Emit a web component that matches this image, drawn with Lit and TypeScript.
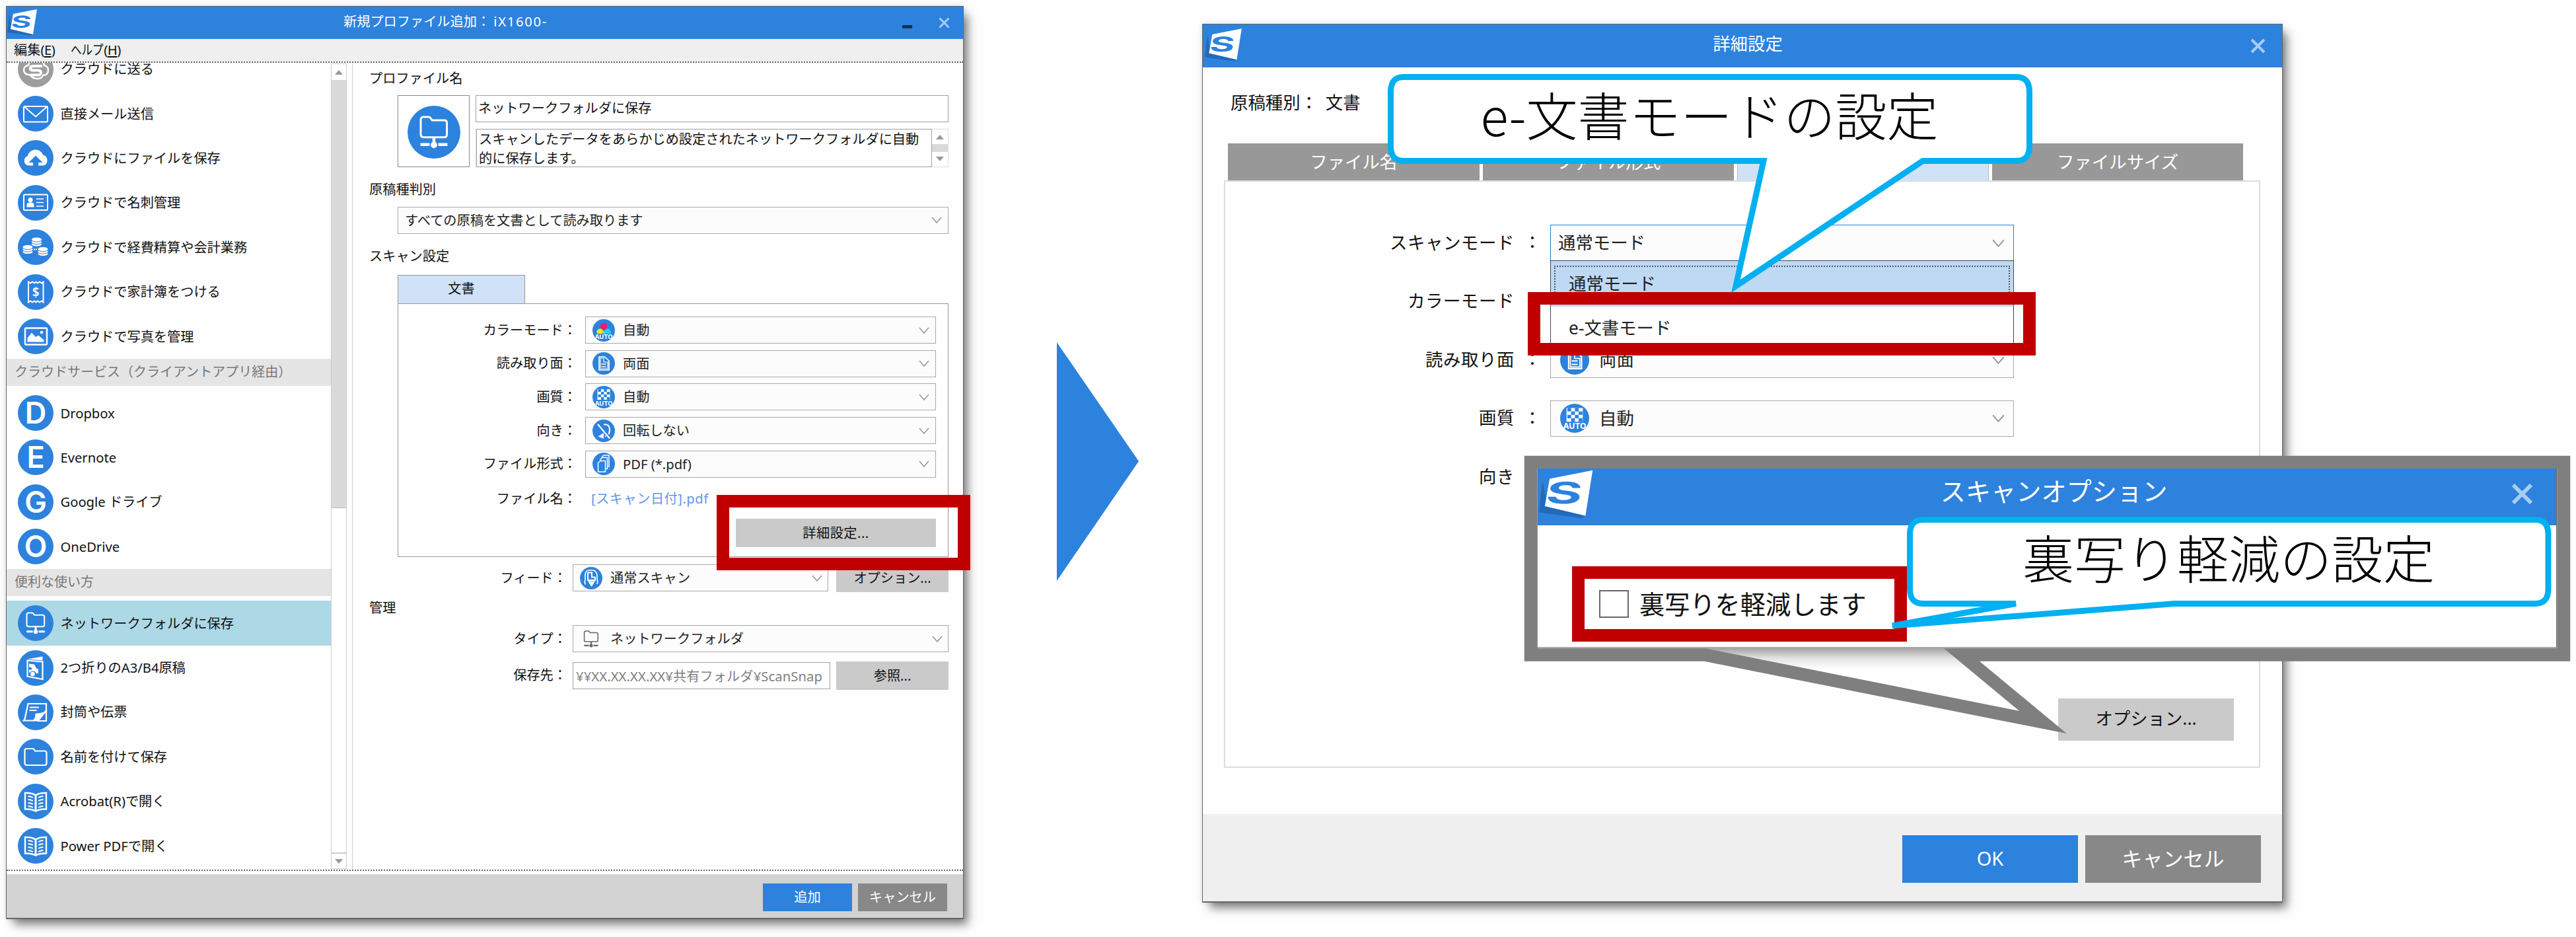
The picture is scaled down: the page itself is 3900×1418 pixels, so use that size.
import { LitElement, css, html, svg, nothing } from "lit";
import type { SVGTemplateResult } from "lit";
import { customElement, property } from "lit/decorators.js";
import { classMap } from "lit/directives/class-map.js";

const networkFolder = svg`
  <path d="M13.5 14.5q0-3 3-3h5.2q1.3 0 2 1.3l1.3 2h12.5q2.7 0 2.7 2.7v12q0 2.7-2.7 2.7H16.500q-3 0-3-3z" fill="none" stroke="currentColor" stroke-width="2"/>
  <path d="M13.200 39.700h9.300M31.500 39.700h9.300M27 33v4" stroke="currentColor" stroke-width="3"/>
  <circle cx="27" cy="40" r="3.300" fill="currentColor"/>`;

const book = svg`
  <path d="M27 17.500q-6-4-16-3.500v24.500q10-.5 16 3 6-3.500 16-3V14q-10-.5-16 3.500z" fill="none" stroke="#fff" stroke-width="2.400"/>
  <path d="M27 17v24" stroke="#fff" stroke-width="3"/>
  <path d="M15.500 19q4 0 7.500 2M15.500 24q4 0 7.500 2M15.500 29q4 0 7.500 2M15.500 34q4 0 7.500 2M38.500 19q-4 0-7.500 2M38.500 24q-4 0-7.500 2M38.500 29q-4 0-7.500 2M38.500 34q-4 0-7.500 2" fill="none" stroke="#fff" stroke-width="1.800"/>`;

const coins = (x: number, y: number) => svg`
  <g transform="translate(${x} ${y})" fill="#fff" stroke="#2d82dd" stroke-width="1">
    <ellipse cx="0" cy="10" rx="8" ry="3.600"/>
    <ellipse cx="0" cy="6.500" rx="8" ry="3.600"/>
    <ellipse cx="0" cy="3" rx="8" ry="3.600"/>
  </g>`;

const letter = (char: string) => svg`
  <text x="27" y="43.300" text-anchor="middle" font-family="Inter, sans-serif" font-weight="600" font-size="45" fill="#fff">${char}</text>`;

const glyphs: Record<string, SVGTemplateResult> = {
  send: svg`
    <path d="M17 35c-5 0-8-3-8-7s3-7 7-7c1-6 6-9 12-9s11 4 12 9c4 1 6 4 6 7 0 5-3 8-8 8-1 3-4 5-8 5-6 0-9-2-11-5z" fill="none" stroke="#fff" stroke-width="2.400"/>
    <path d="M37 22H24c-3 0-5 1-5 3.500s2 3 4 3h8c2.500 0 4 1 4 3.500S33 35.500 31 35.500H19" fill="none" stroke="#fff" stroke-width="4"/>`,
  mail: svg`
    <rect x="9" y="16" width="36" height="23.500" rx="1.500" fill="none" stroke="#fff" stroke-width="2"/>
    <path d="M10.500 17 27 31.500 43.500 17" fill="none" stroke="#fff" stroke-width="2"/>`,
  cloud: svg`
    <path d="M16.500 38.500a7.300 7.300 0 0 1-1.800-14.200 12.300 12.300 0 0 1 23.600-1.700 8.200 8.200 0 0 1 .2 15.900z" fill="#fff"/>
    <path d="M27 23.500 37.500 34H31v5h-8v-5h-6.500z" fill="#2d82dd"/>`,
  card: svg`
    <rect x="9" y="14.500" width="36" height="23.500" rx="1.500" fill="none" stroke="#fff" stroke-width="2"/>
    <circle cx="19" cy="22.500" r="3.500" fill="#fff"/>
    <path d="M13.500 33.500v-3q0-4 4-4h3q4 0 4 4v3z" fill="#fff"/>
    <path d="M28 21h11M28 26.500h11M28 32h11" stroke="#fff" stroke-width="1.500"/>`,
  coins: svg`${coins(28.5, 12.5)}${coins(15, 24)}${coins(38, 27)}
    <path d="M24 30.500h5" stroke="#fff" stroke-width="2" stroke-dasharray="2 1"/>`,
  receipt: svg`
    <path d="M16 11.500l3 2 3-2 3 2 2.500-2 2.500 2 3-2 3 2 2.500-2v31l-2.500-2-3 2-3-2-2.500 2-2.500-2-3 2-3-2-3 2z" fill="none" stroke="#fff" stroke-width="2"/>
    <text x="27.200" y="34" text-anchor="middle" font-family="Noto Sans, sans-serif" font-size="19" font-weight="600" fill="#fff">$</text>`,
  photo: svg`
    <rect x="11" y="14.500" width="33" height="25" rx="1.500" fill="none" stroke="#fff" stroke-width="2.400"/>
    <path d="M14.500 35.500v-6l6.500-8 6 6.500 4-2.500 8.500 7v3z" fill="#fff"/>
    <circle cx="36" cy="21" r="2.300" fill="#fff"/>`,
  dropbox: letter("D"),
  evernote: letter("E"),
  google: letter("G"),
  onedrive: letter("O"),
  network: networkFolder,
  flyer: svg`
    <path d="M14.500 15.500 37.500 17.500V44L14.500 39.500z" fill="none" stroke="#fff" stroke-width="2.200"/>
    <path d="M14 13.500 37.500 9.500V15.500z" fill="#fff"/>
    <path d="M17 20.500l8 1 3 6 3 1v6l-3 1q-1-4-5-4t-5 3l-1-1v-4h4v-3l-4-1z" fill="#fff"/>
    <circle cx="22.500" cy="36" r="3.300" fill="#fff"/>`,
  envelope: svg`
    <path d="M15.500 14H43v10L31 39.500H9q2-2 2.500-7z" fill="none" stroke="#fff" stroke-width="2.200"/>
    <path d="M43 24q-3 4-17 5 2 4-3 10h8.500z" fill="#fff"/>
    <path d="M43 24v16H29" fill="none" stroke="#fff" stroke-width="2.200"/>
    <path d="M18 19.500h14M17.500 24h11" stroke="#fff" stroke-width="2"/>`,
  folder: svg`
    <path d="M10.500 18q0-3 3-3h9q1.500 0 2.200 1.300l1.300 2.200h14.500q3 0 3 3v15.500q0 3-3 3h-27q-3 0-3-3z" fill="none" stroke="#fff" stroke-width="2.200"/>`,
  book,
};

const auto = svg`<text x="17" y="29.500" text-anchor="middle" font-family="Inter, sans-serif" font-size="9.500" font-weight="700" fill="#fff">AUTO</text>`;

// checker cells of the image quality symbol
const checker = [0, 1, 2, 3].flatMap((row) =>
  [0, 1, 2, 3].filter((col) => (row + col) % 2 === 0).map((col) => [8.5 + col * 4.4, 5 + row * 4]),
);

const smallGlyphs: Record<string, SVGTemplateResult> = {
  color: svg`
    <circle cx="17" cy="11" r="5.300" fill="#f01a70"/>
    <circle cx="11.500" cy="19.500" r="5" fill="#f5e614"/>
    <circle cx="23" cy="19.500" r="5" fill="#19d3ee"/>
    <path d="M14 26q-1-6 3-9 3 3 2 9z" fill="#7ddf92"/>
    <path d="M5 22h24v8H5z" fill="#2d82dd"/>${auto}`,
  page: svg`
    <path d="M10 7h8.500l6.500 6v14H10z" fill="none" stroke="#fff" stroke-width="1.700"/>
    <path d="M12 9h5v6h6v10H12z" fill="none" stroke="#fff" stroke-width="1.200"/>
    <path d="M13.500 18h7M13.500 22h7" stroke="#fff" stroke-width="1.600"/>`,
  quality: svg`
    <rect x="7.500" y="5" width="19" height="16" fill="#fff"/>
    ${checker.map(([x, y]) => svg`<rect x="${x}" y="${y}" width="4.400" height="4" fill="#2d82dd"/>`)}
    ${auto}`,
  rotate: svg`
    <path d="M17 7.500h4q5 1 5 8.500t-7 9.500" fill="none" stroke="#fff" stroke-width="2.200"/>
    <path d="M8.500 25.500 17 20v9z" fill="#fff"/>
    <path d="M9 6.500 26 28" stroke="#2d82dd" stroke-width="5"/>
    <path d="M8 7 26 28.500" stroke="#fff" stroke-width="2.200"/>`,
  pages: svg`
    <g fill="#2d82dd" stroke="#fff" stroke-width="1.500">
      <path d="M14.500 6l3-2h7.500v17h-10.500z"/>
      <path d="M12 10l3-2.500h7.500v17H12z"/>
      <path d="M8.500 15.500l3.500-3h7.500V29H8.500z"/>
    </g>`,
  feed: svg`
    <path d="M8 26.500q-1.500-4 0-8V11q1-6 6-6h7q5 3 5 8v5q1.500 4 0 8" fill="none" stroke="#fff" stroke-width="1.700"/>
    <path d="M12 8.500h6v7h5M12 8v12h11v-5" fill="none" stroke="#fff" stroke-width="2"/>
    <path d="M12 21.500h11L17.500 30z" fill="#fff"/>`,
};

@customElement("round-icon")
export class RoundIcon extends LitElement {
  @property({ type: String }) name = "";
  @property({ type: Boolean, reflect: true }) muted = false;

  static styles = css`
    :host {
      display: block;
      flex: none;
      width: 54px;
      height: 54px;
      border-radius: 50%;
      background: #2d82dd;
      color: #fff;
    }
    :host([muted]) {
      background: #9d9d9d;
    }
    svg {
      display: block;
      width: 100%;
      height: 100%;
    }
  `;

  render() {
    const small = this.name in smallGlyphs;
    return html`<svg viewBox=${small ? "0 0 34 34" : "0 0 54 54"}>
      ${small ? smallGlyphs[this.name] : glyphs[this.name]}
    </svg>`;
  }
}

type Entry = { icon: string; label: string; muted?: boolean; selected?: boolean };

const cloudEntries: Entry[] = [
  { icon: "send", label: "クラウドに送る", muted: true },
  { icon: "mail", label: "直接メール送信" },
  { icon: "cloud", label: "クラウドにファイルを保存" },
  { icon: "card", label: "クラウドで名刺管理" },
  { icon: "coins", label: "クラウドで経費精算や会計業務" },
  { icon: "receipt", label: "クラウドで家計簿をつける" },
  { icon: "photo", label: "クラウドで写真を管理" },
];

const serviceEntries: Entry[] = [
  { icon: "dropbox", label: "Dropbox" },
  { icon: "evernote", label: "Evernote" },
  { icon: "google", label: "Google ドライブ" },
  { icon: "onedrive", label: "OneDrive" },
];

const usageEntries: Entry[] = [
  { icon: "network", label: "ネットワークフォルダに保存", selected: true },
  { icon: "flyer", label: "2つ折りのA3/B4原稿" },
  { icon: "envelope", label: "封筒や伝票" },
  { icon: "folder", label: "名前を付けて保存" },
  { icon: "book", label: "Acrobat(R)で開く" },
  { icon: "book", label: "Power PDFで開く" },
];

const scanSettings = [
  { label: "カラーモード", icon: "color", value: "自動" },
  { label: "読み取り面", icon: "page", value: "両面" },
  { label: "画質", icon: "quality", value: "自動" },
  { label: "向き", icon: "rotate", value: "回転しない" },
  { label: "ファイル形式", icon: "pages", value: "PDF (*.pdf)" },
];

@customElement("app-root")
export class AppRoot extends LitElement {
  static styles = css`
    :host {
      display: block;
      position: relative;
      width: 3900px;
      height: 1418px;
      overflow: hidden;
      background: #fefefe;
      color: #111;
      font-family: "Noto Sans", "Noto Sans CJK JP", sans-serif;
      font-size: 20.2px;
      line-height: 30px;
      white-space: nowrap;
    }
    * {
      box-sizing: border-box;
    }

    .window {
      position: absolute;
      isolation: isolate;
      display: flex;
      flex-direction: column;
      background: #fefefe;
      border: 1px solid #666;
      border-bottom-width: 2px;
      box-shadow: 9px 11px 14px -3px rgba(0, 0, 0, 0.5), 0 0 9px rgba(0, 0, 0, 0.12);
    }
    .profile {
      left: 9px;
      top: 9px;
      width: 1450px;
      height: 1382px;
    }
    .detail {
      left: 1820px;
      top: 36px;
      width: 1636px;
      height: 1330px;
      font-size: 26.4px;
    }
    .titlebar {
      position: relative;
      flex: none;
      display: flex;
      align-items: center;
      justify-content: space-between;
      background: #2d82dd;
      color: #fff;
    }
    .title {
      position: absolute;
      inset: 0;
      display: flex;
      align-items: center;
      justify-content: center;
    }
    .profile .titlebar {
      height: 49px;
    }
    .profile .title {
      justify-content: flex-start;
      padding: 0 0 5px 510px;
    }
    .latin {
      letter-spacing: 1.700px;
    }
    .detail .titlebar {
      height: 65px;
    }
    .detail .title {
      padding: 0 0 7px 16px;
    }
    .logo {
      display: block;
      width: 47px;
      height: 42px;
      margin-bottom: 2px;
    }
    .detail .logo {
      width: 60px;
      height: 52px;
      margin: 0 0 3px 1px;
    }
    .controls {
      display: flex;
      align-items: flex-end;
      gap: 40px;
      margin-right: 20px;
    }
    .minimize {
      width: 15px;
      height: 5px;
      background: #15304f;
    }
    .close {
      display: block;
      width: 17px;
      height: 17px;
    }
    .detail .close {
      width: 23px;
      height: 23px;
      margin-right: 5px;
    }

    .menubar {
      flex: none;
      display: flex;
      gap: 24px;
      height: 36px;
      padding-left: 11px;
      line-height: 33px;
      background: #efefef;
      border-bottom: 2px dotted #666;
    }
    .menubar .narrow {
      display: inline-block;
      width: 50px;
      transform: scaleX(0.82);
      transform-origin: 0 50%;
    }
    .menubar .key {
      letter-spacing: -0.5px;
    }
    .body {
      flex: none;
      display: flex;
      height: 1223px;
      border-bottom: 2px dotted #666;
    }
    .list {
      width: 491px;
      height: 1221px;
      padding-top: 1px;
      overflow: hidden;
    }
    .entries {
      margin-top: -25px;
    }
    .entry {
      display: flex;
      align-items: center;
      gap: 10.500px;
      height: 67.4px;
      padding-left: 17px;
    }
    .entry span {
      padding-bottom: 1px;
    }
    .entry.selected {
      background: #add8e6;
    }
    .group {
      height: 41.2px;
      margin-bottom: 7.4px;
      padding-left: 12px;
      line-height: 40px;
      background: #e5e5e5;
      color: #777;
      font-size: 20px;
    }
    .scrollbar {
      display: flex;
      flex-direction: column;
      width: 24px;
      margin: 1px 8px 1px 0;
      border: 1px solid #ccc;
      background: #fff;
    }
    .arrow {
      flex: none;
      display: flex;
      align-items: center;
      justify-content: center;
      height: 24px;
      color: #999;
    }
    .arrow svg {
      width: 12px;
      height: 7px;
    }
    .thumb {
      height: 648px;
      background: #dadada;
      border-bottom: 1px solid #bbb;
    }
    .scrollbar .arrow:last-child {
      margin-top: auto;
      border-top: 2px solid #ccc;
    }

    .pane {
      flex: 1;
      display: flex;
      flex-direction: column;
      padding: 0 22px 0 25px;
      border-left: 1px solid #ccc;
    }
    .heading {
      height: 30px;
      margin: 18.5px 0 11.5px;
    }
    .heading:first-child {
      margin: 8px 0 10.5px;
    }
    .indent {
      margin-left: 43px;
    }
    .identity {
      display: flex;
      gap: 9px;
      height: 109px;
    }
    .picture {
      display: flex;
      align-items: center;
      justify-content: center;
      width: 109px;
      border: 1.500px solid #888;
    }
    .picture round-icon {
      width: 80px;
      height: 80px;
      margin-top: 4px;
    }
    .fields {
      flex: 1;
      display: flex;
      flex-direction: column;
      justify-content: space-between;
    }
    .input {
      height: 41px;
      padding-left: 3px;
      line-height: 37px;
      border: 1.500px solid #a0a0a8;
      background: #fff;
    }
    .memo {
      display: flex;
      height: 58px;
      border: 1px solid #ddd;
    }
    .memo p {
      flex: 1;
      margin: -1px 0;
      padding-left: 3px;
      border: 1.500px solid #a0a0a8;
      line-height: 29px;
    }
    .steps {
      display: flex;
      flex-direction: column;
      justify-content: space-between;
      width: 24px;
      background: linear-gradient(#fff 40%, #dadada 40% 60%, #fff 60%);
    }
    .steps .arrow {
      height: 23px;
    }

    .select {
      position: relative;
      display: flex;
      align-items: center;
      height: 41px;
      padding: 0 9px 0 10px;
      border: 1.500px solid #a9a9a9;
      background: #fcfcfc;
      color: #222;
    }
    .select round-icon,
    .type-icon {
      width: 34px;
      height: 34px;
      margin-right: 12px;
    }
    .select .value {
      flex: 1;
      padding-bottom: 1px;
    }
    .type-icon {
      color: #666;
    }
    .chevron {
      width: 16px;
      height: 10px;
    }
    .tab {
      width: 193px;
      height: 43px;
      margin-top: 2.500px;
      line-height: 39px;
      text-align: center;
      border: 1.500px solid #999;
      border-bottom: none;
      background: #d0e2f7;
    }
    .settings {
      height: 383.500px;
      padding: 19px 18px 0 0;
      border: 1.500px solid #999;
    }
    .row {
      display: grid;
      grid-template-columns: 270px 1fr;
      column-gap: 13px;
      align-items: center;
      margin-bottom: 9.700px;
    }
    .label {
      text-align: right;
      padding-bottom: 2px;
    }
    .file-row {
      margin: 16px 0 14px;
    }
    .link {
      padding: 0 0 2px 9px;
      color: #6495ed;
      letter-spacing: 0.500px;
    }
    .button {
      display: flex;
      align-items: center;
      justify-content: center;
      padding-bottom: 1px;
      background: #cacaca;
    }
    .settings .button {
      width: 303px;
      height: 43px;
      margin-left: auto;
      letter-spacing: 0.500px;
    }
    .manage {
      display: grid;
      grid-template-columns: 299px 387px 1fr;
      column-gap: 9px;
      align-items: center;
      height: 41.500px;
      margin-bottom: 13px;
    }
    .manage.feed {
      margin: 10.500px 0 0;
    }
    .manage .wide {
      grid-column: 2 / 4;
    }
    .manage .select {
      padding-right: 8px;
    }
    .manage .button {
      height: 43px;
      margin-left: 3px;
    }
    .manage.feed + .heading {
      margin: 9.500px 0 12px;
    }
    .path {
      width: 390px;
      color: #808080;
      line-height: 40px;
      padding-left: 4px;
      letter-spacing: 0.1px;
    }
    .footer {
      flex: 1;
      display: flex;
      align-items: center;
      justify-content: flex-end;
      gap: 9px;
      margin-top: 5px;
      padding: 3px 24px 0 0;
      background: #d2d2d2;
      color: #fff;
    }
    .footer .button {
      width: 135px;
      height: 42px;
    }
    .footer .primary {
      background: #2d82dd;
    }
    .footer .secondary {
      background: #888;
    }

    .kind {
      margin: 38px 0 0 42px;
      height: 33px;
      word-spacing: 5px;
    }
    .tabs {
      display: flex;
      gap: 5px;
      height: 56px;
      margin: 44px 0 0 38px;
      color: #fff;
    }
    .tabs div {
      width: 380.600px;
      padding-bottom: 2px;
      line-height: 56px;
      text-align: center;
      background: #989898;
    }
    .tabs .current {
      background: #d0e2f7;
      border: 1px solid #bbb;
      border-bottom: none;
    }
    .sheet {
      display: flex;
      flex-direction: column;
      width: 1569px;
      height: 889px;
      margin-left: 32px;
      padding: 65px 38px 39px 0;
      border: 2px solid #ddd;
    }
    .option {
      display: grid;
      grid-template-columns: 438px 54px 702px;
      align-items: center;
      height: 55px;
      margin-bottom: 33.500px;
    }
    .option .label {
      letter-spacing: 0.600px;
    }
    .option .colon {
      text-align: center;
      padding-bottom: 3px;
    }
    .option .select {
      height: 55px;
      padding: 0 13px 0 14px;
    }
    .option .select.open {
      padding-left: 11px;
      border-color: #2282d0;
    }
    .option round-icon {
      width: 44px;
      height: 44px;
      margin-right: 15px;
    }
    .option .chevron {
      width: 19px;
      height: 12px;
      margin-left: auto;
    }
    .sheet .button {
      width: 266px;
      height: 64px;
      margin: auto 0 0 auto;
      padding-bottom: 4px;
    }
    .menu {
      position: absolute;
      z-index: 1;
      left: -1px;
      top: 53px;
      width: 702px;
      height: 136px;
      border: 1.500px solid #445;
      background: #fff;
    }
    .menu div {
      height: 66px;
      padding-left: 27px;
      line-height: 64px;
    }
    .menu .active {
      height: 69px;
      padding: 7px 5px 5px;
      background: #bfd9f4;
    }
    .menu .active span {
      display: block;
      height: 57px;
      padding-left: 20px;
      line-height: 50px;
      border: 2px dotted #555;
    }
    .detail .footer {
      flex: none;
      height: 132px;
      margin-top: auto;
      gap: 11px;
      padding: 3px 32px 0 0;
      background: #efefef;
      font-size: 31px;
    }
    .detail .footer .button {
      width: 266px;
      height: 72px;
    }
    .footer .ok {
      font-size: 29px;
    }

    .mark {
      position: absolute;
      border: 19.500px solid #c00000;
    }
    .mark-detail {
      left: 1085px;
      top: 749px;
      width: 384px;
      height: 114px;
    }
    .mark-mode {
      left: 2313px;
      top: 442px;
      width: 769px;
      height: 96px;
    }
    .mark-check {
      left: 2380px;
      top: 857px;
      width: 507px;
      height: 114px;
      display: flex;
      align-items: center;
      gap: 16px;
      padding-left: 22px;
      font-size: 38.200px;
    }
    .checkbox {
      width: 45px;
      height: 42px;
      border: 2.500px solid #666;
      background: #fff;
    }
    .shapes {
      position: absolute;
      left: 0;
      top: 0;
      width: 3900px;
      height: 1418px;
    }
    .zoomed {
      position: absolute;
      left: 2328px;
      top: 709px;
      width: 1543px;
      height: 272px;
      background: #fff;
      border-right: 1px solid #666;
      border-bottom: 2px solid #aaa;
    }
    .zoomed .titlebar {
      height: 86px;
      font-size: 38.200px;
    }
    .zoomed .title {
      padding: 0 0 18px 21px;
    }
    .zoomed .logo {
      width: 85px;
      height: 76px;
      margin: 0 0 8px 0;
    }
    .zoomed .close {
      width: 33px;
      height: 33px;
      margin: 0 15px 10px 0;
    }
    .note {
      position: absolute;
      display: flex;
      align-items: center;
      justify-content: center;
      color: #000;
      font-family: "Noto Sans CJK JP", sans-serif;
      font-size: 78px;
      font-weight: 300;
    }
    .note-mode {
      left: 2101px;
      top: 108px;
      width: 974px;
      height: 127px;
    }
    .note-bleed {
      left: 2887px;
      top: 778px;
      width: 974px;
      height: 127px;
    }
  `;

  logo() {
    return html`<svg class="logo" viewBox="0 0 47 42">
      <path d="M4 9 1 36 37 41 40 38 8 30z" fill="#1c5fae" opacity="0.7" />
      <path d="M10 8 46 1 40 39 6 31z" fill="#fff" />
      <text
        transform="translate(6 29) skewX(-8) scale(1.85 1)"
        font-family="Inter, sans-serif"
        font-weight="700"
        font-size="25"
        fill="#2d82dd"
      >S</text>
    </svg>`;
  }

  close() {
    return html`<svg class="close" viewBox="0 0 17 17">
      <path d="M1.500 1.500l14 14M15.500 1.500l-14 14" stroke="#a8cdf3" stroke-width="3" />
    </svg>`;
  }

  chevron() {
    return html`<svg class="chevron" viewBox="0 0 16 10">
      <path d="M1 1l7 8 7-8" fill="none" stroke="#999" stroke-width="1.600" />
    </svg>`;
  }

  arrow(up: boolean) {
    return html`<div class="arrow">
      <svg viewBox="0 0 12 7"><path d=${up ? "M6 0l6 7H0z" : "M0 0h12L6 7z"} fill="currentColor" /></svg>
    </div>`;
  }

  select(value?: string, icon?: string) {
    return html`<div class="select">
      ${icon ? html`<round-icon name=${icon}></round-icon>` : nothing}
      ${value ? html`<span class="value">${value}</span>` : nothing}
      ${this.chevron()}
    </div>`;
  }

  entries(items: Entry[]) {
    return items.map(
      (item) => html`
        <div class=${classMap({ entry: true, selected: !!item.selected })}>
          <round-icon name=${item.icon} ?muted=${item.muted}></round-icon>
          <span>${item.label}</span>
        </div>
      `,
    );
  }

  option(label: string, content: unknown) {
    return html`<div class="option">
      <span class="label">${label}</span>
      <span class="colon">：</span>
      ${content}
    </div>`;
  }

  profileWindow() {
    return html`
      <div class="window profile">
        <div class="titlebar">
          <div class="title">新規プロファイル追加：&nbsp;<span class="latin">iX1600-</span></div>
          ${this.logo()}
          <div class="controls"><span class="minimize"></span>${this.close()}</div>
        </div>
        <div class="menubar">
          <span>編集<span class="key">(<u>E</u>)</span></span>
          <span><span class="narrow">ヘルプ</span><span class="key">(<u>H</u>)</span></span>
        </div>
        <div class="body">
          <div class="list">
            <div class="entries">
              ${this.entries(cloudEntries)}
              <div class="group">クラウドサービス（クライアントアプリ経由）</div>
              ${this.entries(serviceEntries)}
              <div class="group">便利な使い方</div>
              ${this.entries(usageEntries)}
            </div>
          </div>
          <div class="scrollbar">
            ${this.arrow(true)}
            <div class="thumb"></div>
            ${this.arrow(false)}
          </div>
          <div class="pane">
            <div class="heading">プロファイル名</div>
            <div class="identity indent">
              <div class="picture"><round-icon name="network"></round-icon></div>
              <div class="fields">
                <div class="input">ネットワークフォルダに保存</div>
                <div class="memo">
                  <p>スキャンしたデータをあらかじめ設定されたネットワークフォルダに自動<br />的に保存します。</p>
                  <div class="steps">${this.arrow(true)}${this.arrow(false)}</div>
                </div>
              </div>
            </div>
            <div class="heading">原稿種判別</div>
            <div class="indent">${this.select("すべての原稿を文書として読み取ります")}</div>
            <div class="heading">スキャン設定</div>
            <div class="tab indent">文書</div>
            <div class="settings indent">
              ${scanSettings.map(
                (s) => html`<div class="row">
                  <span class="label">${s.label}：</span>
                  ${this.select(s.value, s.icon)}
                </div>`,
              )}
              <div class="row file-row">
                <span class="label">ファイル名：</span>
                <span class="link">[スキャン日付].pdf</span>
              </div>
              <div class="button">詳細設定...</div>
            </div>
            <div class="manage feed">
              <span class="label">フィード：</span>
              ${this.select("通常スキャン", "feed")}
              <div class="button">オプション...</div>
            </div>
            <div class="heading">管理</div>
            <div class="manage">
              <span class="label">タイプ：</span>
              <div class="select wide">
                <svg class="type-icon" viewBox="5 5 44 44">${networkFolder}</svg>
                <span class="value">ネットワークフォルダ</span>
                ${this.chevron()}
              </div>
            </div>
            <div class="manage">
              <span class="label">保存先：</span>
              <div class="input path">¥¥XX.XX.XX.XX¥共有フォルダ¥ScanSnap</div>
              <div class="button">参照...</div>
            </div>
          </div>
        </div>
        <div class="footer">
          <div class="button primary">追加</div>
          <div class="button secondary">キャンセル</div>
        </div>
      </div>
    `;
  }

  detailWindow() {
    return html`
      <div class="window detail">
        <div class="titlebar">
          <div class="title">詳細設定</div>
          ${this.logo()}
          <div class="controls">${this.close()}</div>
        </div>
        <div class="kind">原稿種別： 文書</div>
        <div class="tabs">
          <div>ファイル名</div>
          <div>ファイル形式</div>
          <div class="current"></div>
          <div>ファイルサイズ</div>
        </div>
        <div class="sheet">
          ${this.option(
            "スキャンモード",
            html`<div class="select open">
              <span class="value">通常モード</span>
              ${this.chevron()}
              <div class="menu">
                <div class="active"><span>通常モード</span></div>
                <div>e-文書モード</div>
              </div>
            </div>`,
          )}
          ${this.option("カラーモード", this.select())}
          ${this.option("読み取り面", this.select("両面", "page"))}
          ${this.option("画質", this.select("自動", "quality"))}
          ${this.option("向き", this.select())}
          <div class="button">オプション...</div>
        </div>
        <div class="footer">
          <div class="button primary ok">OK</div>
          <div class="button secondary">キャンセル</div>
        </div>
      </div>
    `;
  }

  render() {
    return html`
      ${this.profileWindow()}
      <div class="mark mark-detail"></div>
      ${this.detailWindow()}
      <div class="mark mark-mode"></div>

      <svg class="shapes" viewBox="0 0 3900 1418">
        <defs>
          <linearGradient id="fade" x1="0" y1="981" x2="0" y2="1012" gradientUnits="userSpaceOnUse">
            <stop offset="0" stop-color="#a3a3a3" />
            <stop offset="0.500" stop-color="#e4e4e4" />
            <stop offset="1" stop-color="#fefefe" />
          </linearGradient>
        </defs>
        <path d="M1600 518 1724 698 1600 879z" fill="#2d82dd" />
        <path
          d="M2317.500 699.500H3881.500V991H2970L3093 1093 2581 991H2317.500z"
          fill="url(#fade)"
          stroke="#7f7f7f"
          stroke-width="19.500"
          stroke-miterlimit="8"
        />
      </svg>

      <div class="zoomed">
        <div class="titlebar">
          <div class="title">スキャンオプション</div>
          ${this.logo()}
          <div class="controls">${this.close()}</div>
        </div>
      </div>
      <div class="mark mark-check"><span class="checkbox"></span>裏写りを軽減します</div>

      <svg class="shapes" viewBox="0 0 3900 1418">
        <g fill="#fff" stroke="#00b0f0" stroke-width="9">
          <path
            d="M2125.500 116.500H3052.500q20 0 20 22V221.500q0 22-20 22H2911L2628 433 2670 243.500H2125.500q-20 0-20-22V138.500q0-22 20-22z"
          />
          <path
            d="M2911.500 786.500H3838q20 0 20 22V891.500q0 22-20 22H3292L2865 947 3052 913.500H2911.500q-20 0-20-22V808.500q0-22 20-22z"
          />
        </g>
      </svg>
      <div class="note note-mode">e-文書モードの設定</div>
      <div class="note note-bleed">裏写り軽減の設定</div>
    `;
  }
}
